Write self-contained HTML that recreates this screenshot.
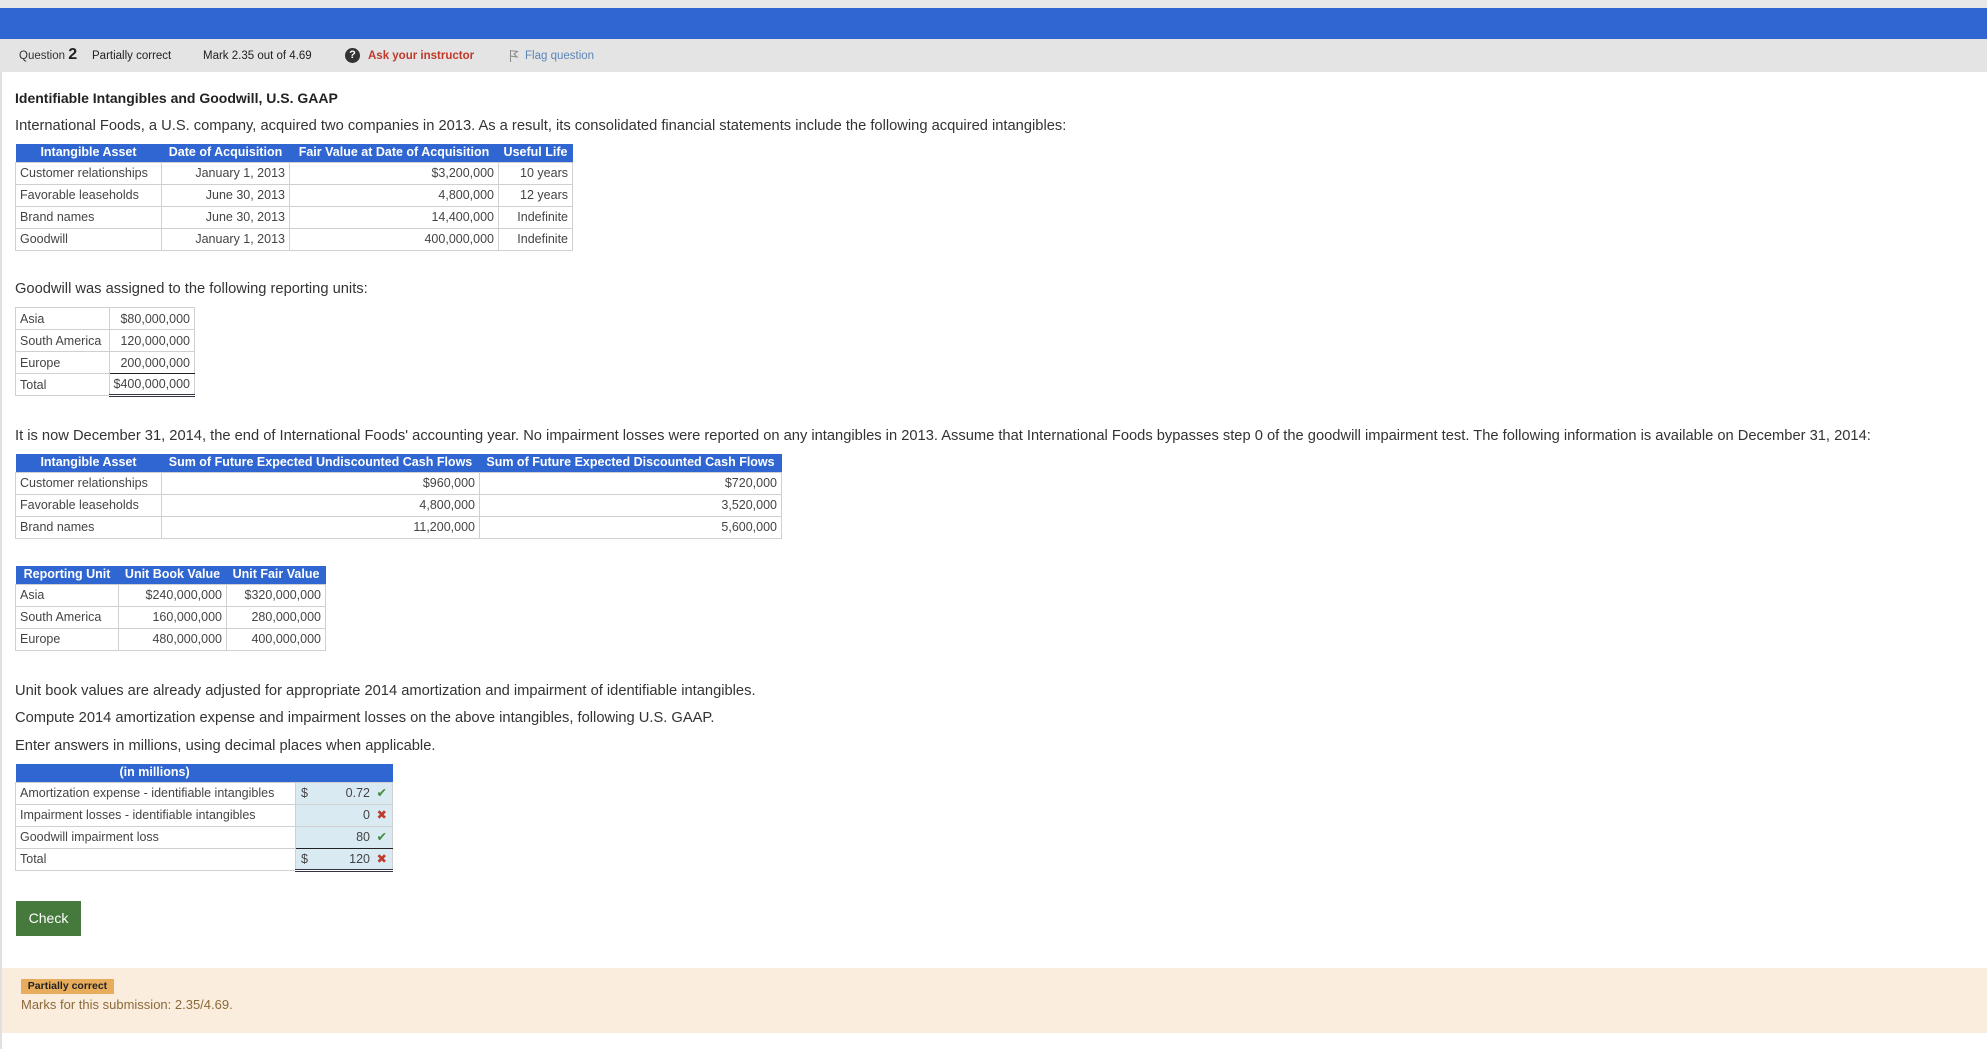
<!DOCTYPE html>
<html><head><meta charset="utf-8"><style>
*{margin:0;padding:0;box-sizing:border-box}
body{width:1987px;height:1049px;position:relative;background:#fff;font-family:"Liberation Sans",sans-serif;color:#333;overflow:hidden}
.a{position:absolute;white-space:nowrap}
table{position:absolute;border-collapse:collapse;font-size:12.5px;color:#444}
td,th{border:1px solid #d0d0d0;height:22px;padding:0 4px;line-height:20px}
th{background:#2f66d1;color:#fff;font-weight:bold;height:18px;line-height:17px;border:none;text-align:center;padding:0 4px}
.r{text-align:right}
.p{font-size:14.7px;color:#333}
.ans{background:#d9eaf3;padding:0 5px}
.ans div{display:flex;justify-content:space-between;align-items:center;white-space:nowrap}
.ans i{font-style:normal;margin-left:auto}
.ans b{width:17px;text-align:right;font-weight:normal}
.ok{color:#3f8a3f}.no{color:#c0392b;font-weight:bold}
</style></head><body>
<div class="a" style="left:0;top:0;width:1987px;height:8px;background:#e8e8e8"></div>
<div class="a" style="left:0;top:8px;width:1987px;height:31px;background:#2f66d1"></div>
<div class="a" style="left:0;top:39px;width:1987px;height:33px;background:#e4e4e4"></div>
<div class="a" style="left:0;top:72px;width:2px;height:977px;background:#e0e0e0"></div>
<div class="a" style="left:19px;top:46px;font-size:11.5px;color:#333">Question <b style="font-size:16px;color:#222">2</b></div>
<div class="a" style="left:92px;top:50px;font-size:11.5px;color:#222">Partially correct</div>
<div class="a" style="left:203px;top:50px;font-size:11.5px;color:#222">Mark 2.35 out of 4.69</div>
<div class="a" style="left:345px;top:48px;width:15px;height:15px;border-radius:50%;background:#333;color:#fff;font-size:11px;font-weight:bold;text-align:center;line-height:15px">?</div>
<div class="a" style="left:368px;top:50px;font-size:11.5px;color:#c0392b;font-weight:bold">Ask your instructor</div>
<svg class="a" style="left:509px;top:49px" width="10" height="14" viewBox="0 0 10 14"><path d="M1.5 1V13M1.5 1.5L8.5 2.5L5 5L8 8L1.5 7" fill="none" stroke="#888" stroke-width="1"/></svg>
<div class="a" style="left:525px;top:50px;font-size:11.5px;color:#5b85b5">Flag question</div>

<div class="a" style="left:15px;top:90px;font-size:14px;font-weight:bold;color:#222">Identifiable Intangibles and Goodwill, U.S. GAAP</div>
<div class="a p" style="left:15px;top:118px">International Foods, a U.S. company, acquired two companies in 2013. As a result, its consolidated financial statements include the following acquired intangibles:</div>

<table style="left:15px;top:144px;width:558px">
<tr><th style="width:146px">Intangible Asset</th><th style="width:128px">Date of Acquisition</th><th style="width:209px">Fair Value at Date of Acquisition</th><th>Useful Life</th></tr>
<tr><td>Customer relationships</td><td class="r">January 1, 2013</td><td class="r">$3,200,000</td><td class="r">10 years</td></tr>
<tr><td>Favorable leaseholds</td><td class="r">June 30, 2013</td><td class="r">4,800,000</td><td class="r">12 years</td></tr>
<tr><td>Brand names</td><td class="r">June 30, 2013</td><td class="r">14,400,000</td><td class="r">Indefinite</td></tr>
<tr><td>Goodwill</td><td class="r">January 1, 2013</td><td class="r">400,000,000</td><td class="r">Indefinite</td></tr>
</table>

<div class="a p" style="left:15px;top:281px">Goodwill was assigned to the following reporting units:</div>
<table style="left:15px;top:307px;width:180px">
<tr><td style="width:95px">Asia</td><td class="r">$80,000,000</td></tr>
<tr><td>South America</td><td class="r">120,000,000</td></tr>
<tr><td>Europe</td><td class="r" style="border-bottom:1px solid #222">200,000,000</td></tr>
<tr><td>Total</td><td class="r" style="border-bottom:3px double #334">$400,000,000</td></tr>
</table>

<div class="a p" style="left:15px;top:428px">It is now December 31, 2014, the end of International Foods' accounting year. No impairment losses were reported on any intangibles in 2013. Assume that International Foods bypasses step 0 of the goodwill impairment test. The following information is available on December 31, 2014:</div>
<table style="left:15px;top:454px;width:767px">
<tr><th style="width:146px">Intangible Asset</th><th style="width:318px">Sum of Future Expected Undiscounted Cash Flows</th><th>Sum of Future Expected Discounted Cash Flows</th></tr>
<tr><td>Customer relationships</td><td class="r">$960,000</td><td class="r">$720,000</td></tr>
<tr><td>Favorable leaseholds</td><td class="r">4,800,000</td><td class="r">3,520,000</td></tr>
<tr><td>Brand names</td><td class="r">11,200,000</td><td class="r">5,600,000</td></tr>
</table>

<table style="left:15px;top:566px;width:311px">
<tr><th style="width:103px">Reporting Unit</th><th style="width:108px">Unit Book Value</th><th>Unit Fair Value</th></tr>
<tr><td>Asia</td><td class="r">$240,000,000</td><td class="r">$320,000,000</td></tr>
<tr><td>South America</td><td class="r">160,000,000</td><td class="r">280,000,000</td></tr>
<tr><td>Europe</td><td class="r">480,000,000</td><td class="r">400,000,000</td></tr>
</table>

<div class="a p" style="left:15px;top:683px">Unit book values are already adjusted for appropriate 2014 amortization and impairment of identifiable intangibles.</div>
<div class="a p" style="left:15px;top:710px">Compute 2014 amortization expense and impairment losses on the above intangibles, following U.S. GAAP.</div>
<div class="a p" style="left:15px;top:738px">Enter answers in millions, using decimal places when applicable.</div>

<table style="left:15px;top:764px;width:378px">
<tr><th colspan="2" style="text-align:left;padding-left:104px">(in millions)</th></tr>
<tr><td style="width:280px">Amortization expense - identifiable intangibles</td><td class="ans"><div><span>$</span><i>0.72</i><b class="ok">✔</b></div></td></tr>
<tr><td>Impairment losses - identifiable intangibles</td><td class="ans"><div><span></span><i>0</i><b class="no">✖</b></div></td></tr>
<tr><td>Goodwill impairment loss</td><td class="ans" style="border-bottom:1px solid #222"><div><span></span><i>80</i><b class="ok">✔</b></div></td></tr>
<tr><td>Total</td><td class="ans" style="border-bottom:3px double #334"><div><span>$</span><i>120</i><b class="no">✖</b></div></td></tr>
</table>

<div class="a" style="left:16px;top:901px;width:65px;height:35px;background:#467a3c;color:#fff;font-size:14px;text-align:center;line-height:35px">Check</div>

<div class="a" style="left:2px;top:968px;width:1985px;height:65px;background:#faeddd"></div>
<div class="a" style="left:21px;top:979px;width:93px;height:15px;background:#e8ad5c;color:#222;font-size:10.5px;font-weight:bold;text-align:center;line-height:15px">Partially correct</div>
<div class="a" style="left:21px;top:997px;font-size:13px;color:#8a6a3a">Marks for this submission: 2.35/4.69.</div>
</body></html>
